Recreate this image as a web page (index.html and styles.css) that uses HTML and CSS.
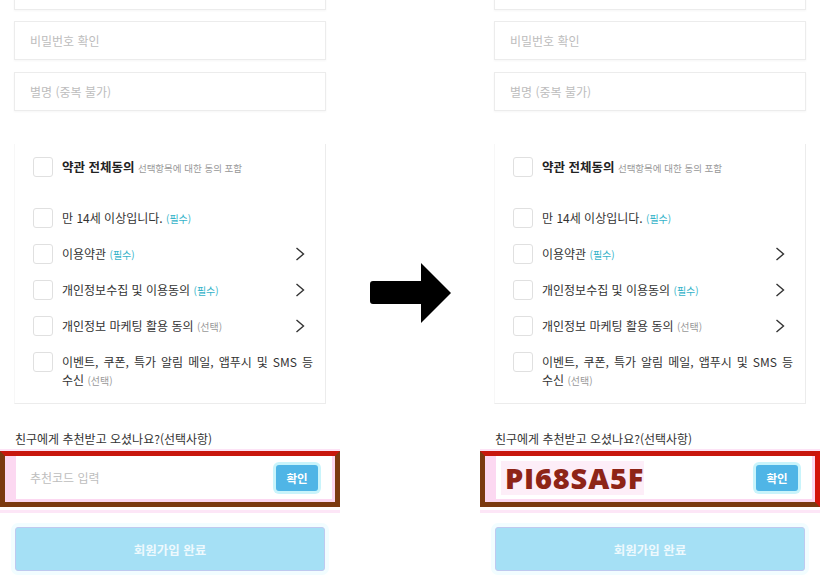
FILE: index.html
```html
<!DOCTYPE html>
<html lang="ko">
<head>
<meta charset="utf-8">
<link rel="stylesheet" href="styles.css">
</head>
<body>
<div class="stage">
  <section class="panel">
    <div class="field first"></div>
    <div class="field"><span class="ph">비밀번호 확인</span></div>
    <div class="field"><span class="ph">별명 (중복 불가)</span></div>
    <div class="card">
      <div class="row all"><span class="cb"></span><span class="txt"><b>약관 전체동의</b> <small class="gray tiny">선택항목에 대한 동의 포함</small></span></div>
      <div class="list">
        <div class="row"><span class="cb"></span><span class="txt">만 14세 이상입니다. <small class="req">(필수)</small></span></div>
        <div class="row"><span class="cb"></span><span class="txt">이용약관 <small class="req">(필수)</small></span><svg class="chev" viewBox="0 0 10 14"><path d="M1.5 1 L8.5 7 L1.5 13" fill="none" stroke="#333" stroke-width="1.4"/></svg></div>
        <div class="row"><span class="cb"></span><span class="txt">개인정보수집 및 이용동의 <small class="req">(필수)</small></span><svg class="chev" viewBox="0 0 10 14"><path d="M1.5 1 L8.5 7 L1.5 13" fill="none" stroke="#333" stroke-width="1.4"/></svg></div>
        <div class="row"><span class="cb"></span><span class="txt">개인정보 마케팅 활용 동의 <small class="gray">(선택)</small></span><svg class="chev" viewBox="0 0 10 14"><path d="M1.5 1 L8.5 7 L1.5 13" fill="none" stroke="#333" stroke-width="1.4"/></svg></div>
        <div class="row multi"><span class="cb"></span><span class="txt wide"><span class="line just">이벤트, 쿠폰, 특가 알림 메일, 앱푸시 및 SMS 등</span><span class="line">수신 <small class="gray">(선택)</small></span></span></div>
      </div>
    </div>
    <p class="label">친구에게 추천받고 오셨나요?(선택사항)</p>
    <div class="hl">
      <div class="code-input"><span class="ph">추천코드 입력</span><span class="ok">확인</span></div>
    </div>
    <div class="submit">회원가입 완료</div>
  </section>

  <div class="mid">
    <svg class="arrow" width="82" height="61" viewBox="0 0 82 61"><path d="M3 18 H51 V0 L81 30 L51 60 V41 H3 Q0 41 0 38 V21 Q0 18 3 18 Z" fill="#000"/></svg>
  </div>

  <section class="panel">
    <div class="field first"></div>
    <div class="field"><span class="ph">비밀번호 확인</span></div>
    <div class="field"><span class="ph">별명 (중복 불가)</span></div>
    <div class="card">
      <div class="row all"><span class="cb"></span><span class="txt"><b>약관 전체동의</b> <small class="gray tiny">선택항목에 대한 동의 포함</small></span></div>
      <div class="list">
        <div class="row"><span class="cb"></span><span class="txt">만 14세 이상입니다. <small class="req">(필수)</small></span></div>
        <div class="row"><span class="cb"></span><span class="txt">이용약관 <small class="req">(필수)</small></span><svg class="chev" viewBox="0 0 10 14"><path d="M1.5 1 L8.5 7 L1.5 13" fill="none" stroke="#333" stroke-width="1.4"/></svg></div>
        <div class="row"><span class="cb"></span><span class="txt">개인정보수집 및 이용동의 <small class="req">(필수)</small></span><svg class="chev" viewBox="0 0 10 14"><path d="M1.5 1 L8.5 7 L1.5 13" fill="none" stroke="#333" stroke-width="1.4"/></svg></div>
        <div class="row"><span class="cb"></span><span class="txt">개인정보 마케팅 활용 동의 <small class="gray">(선택)</small></span><svg class="chev" viewBox="0 0 10 14"><path d="M1.5 1 L8.5 7 L1.5 13" fill="none" stroke="#333" stroke-width="1.4"/></svg></div>
        <div class="row multi"><span class="cb"></span><span class="txt wide"><span class="line just">이벤트, 쿠폰, 특가 알림 메일, 앱푸시 및 SMS 등</span><span class="line">수신 <small class="gray">(선택)</small></span></span></div>
      </div>
    </div>
    <p class="label">친구에게 추천받고 오셨나요?(선택사항)</p>
    <div class="hl right">
      <div class="code-input"><span class="code">PI68SA5F</span><span class="ok">확인</span></div>
    </div>
    <div class="submit">회원가입 완료</div>
  </section>
</div>
</body>
</html>
```

FILE: styles.css
```css
* { box-sizing: border-box; }
html, body { margin: 0; padding: 0; background: #fff; }
body {
  width: 820px;
  height: 584px;
  overflow: hidden;
  font-family: "Noto Sans CJK KR", "Noto Sans", sans-serif;
  color: #333;
}
.stage {
  display: flex;
  width: 820px;
  height: 584px;
}
.panel {
  width: 340px;
  flex: none;
  display: flex;
  flex-direction: column;
}
.mid {
  width: 140px;
  flex: none;
  padding: 263px 0 0 30px;
}
.arrow { display: block; }

.field {
  margin: 0 14px 12px 14px;
  height: 39px;
  flex: none;
  border: 1px solid #ececec;
  box-shadow: 0 1px 2px rgba(0,0,0,0.04);
  display: flex;
  align-items: center;
  padding-left: 15px;
}
.field.first { margin-top: -29px; margin-bottom: 11px; }
.ph { font-size: 12px; color: #bdbdbd; line-height: 16px; }

.card {
  margin: 21px 14px 0 14px;
  height: 260px;
  flex: none;
  border-right: 1px solid #ececec;
  border-bottom: 1px solid #ececec;
  border-left: 1px solid #f7f7f7;
  padding: 13px 0 0 18px;
}
.row {
  display: flex;
  align-items: flex-start;
  min-height: 20px;
}
.cb {
  width: 20px;
  height: 20px;
  flex: none;
  border: 1px solid #e0e0e0;
  border-radius: 3px;
  margin-right: 9px;
}
.txt {
  font-size: 12px;
  line-height: 20px;
  height: 20px;
  color: #333;
  flex: 1;
}
.txt b { font-weight: 700; color: #222; font-size: 12.5px; }
small { font-size: 10px; line-height: 1; }
.tiny { font-size: 9.5px; }
.gray { color: #999; }
.req { color: #34b3c9; }
.list {
  margin-top: 31px;
  display: flex;
  flex-direction: column;
  gap: 16px;
}
.chev {
  width: 10px;
  height: 14px;
  flex: none;
  margin: 3px 20px 0 0;
}
.multi .txt { height: auto; line-height: 18px; margin-top: 1px; }
.wide { padding-right: 12px; }
.line { display: block; }
.just { text-align: justify; text-align-last: justify; }

.label {
  margin: 27px 15px 4px 15px;
  font-size: 12px;
  line-height: 16px;
  color: #333;
}
.hl {
  height: 56px;
  flex: none;
  border: 5px solid #7b3a10;
  border-top: 5px solid #c8170d;
  background: #fcd8f1;
  padding: 0 3px 3px 11px;
  box-shadow: 0 -2px 0 #fde3f6, 0 3px 0 #fff, 0 6px 0 #fde6f7;
}
.hl.right { border-right-color: #d3140b; }
.code-input {
  height: 100%;
  background: #fff;
  display: flex;
  align-items: center;
  justify-content: space-between;
  padding: 0 14px 0 14px;
}
.ok {
  width: 42px;
  height: 26px;
  background: #4fb5e6;
  border-radius: 3px;
  color: #fff;
  font-size: 11.5px;
  font-weight: 700;
  display: flex;
  align-items: center;
  justify-content: center;
  box-shadow: 0 0 0 3px #c9f4fb;
  margin-top: 1px;
}
.code {
  font-family: "Open Sans", "Noto Sans", sans-serif;
  font-weight: 800;
  font-size: 29px;
  letter-spacing: 0.8px;
  color: #8e2417;
  background: #fdeef8;
  margin-left: -9px;
  padding-left: 4px;
  line-height: 34px;
}
.submit {
  margin: 20px 15px 0 15px;
  height: 44px;
  flex: none;
  background: #a5e0f5;
  border: 1px solid #c0c9ef;
  border-radius: 3px;
  color: #eef9fd;
  font-size: 12.5px;
  font-weight: 700;
  display: flex;
  align-items: center;
  justify-content: center;
  box-shadow: 0 0 0 4px #f2fdff;
}
```
